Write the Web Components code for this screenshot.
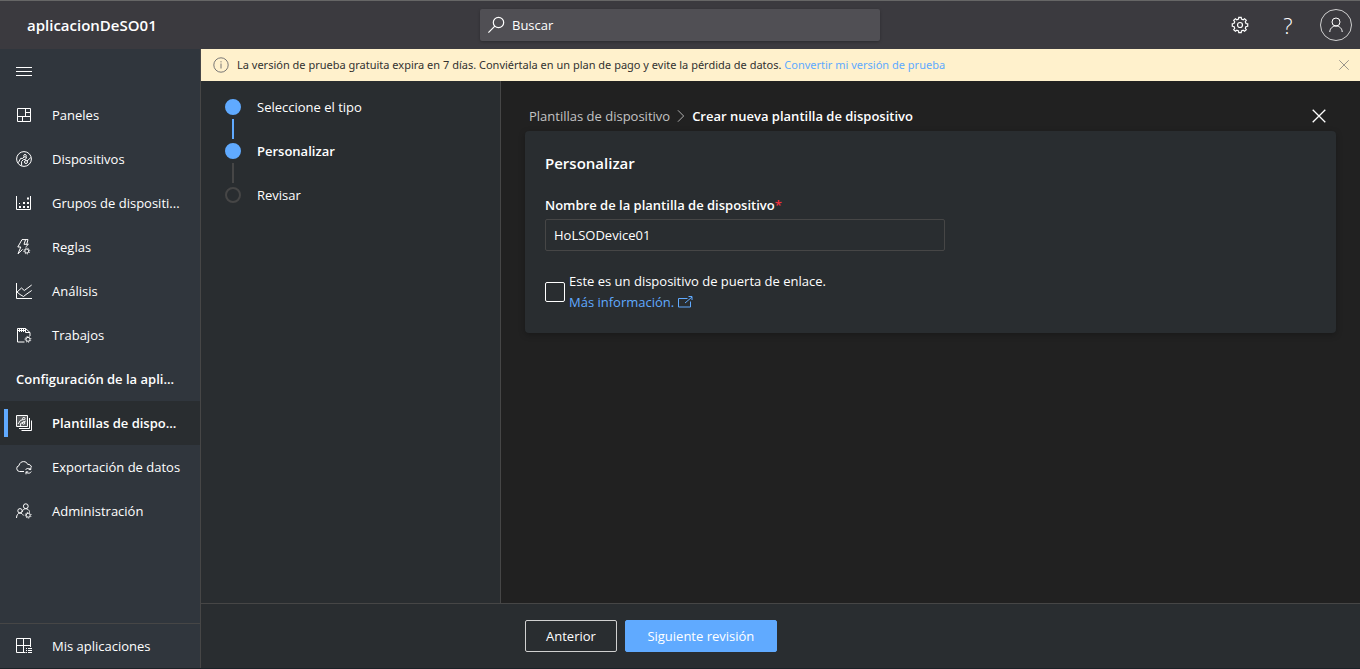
<!DOCTYPE html>
<html lang="es">
<head>
<meta charset="utf-8">
<meta name="viewport" content="width=device-width, initial-scale=1">
<title>aplicacionDeSO01</title>
<style>
  :root {
    --bar: #3b3a3f; --field: #504f54; --nav: #30363d; --panel: #292d30; --page: #212121;
    --line: #464646; --accent: #60aaff; --notice: #fff1cc;
    --base: 13px; --small: 11px; --large: 15px;
  }
  body {
    margin: 0; min-height: 100vh; display: flex; background: var(--page); color: #fff;
    font: 13px/20px "Open Sans", "Noto Sans", sans-serif;
  }
  central-app { flex: 1; }
</style>
</head>
<body>
<central-app></central-app>
<script>
function gear(cx, cy, outer, inner, teeth) {
  const step = Math.PI * 2 / teeth;
  const pts = [];
  for (let i = 0; i < teeth; i++) {
    const a = i * step;
    for (const [r, off] of [[inner, -0.3], [outer, -0.2], [outer, 0.2], [inner, 0.3]]) {
      pts.push((cx + r * Math.cos(a + off * step)).toFixed(2) + ' ' + (cy + r * Math.sin(a + off * step)).toFixed(2));
    }
  }
  return 'M' + pts.join('L') + 'Z';
}
const smallGear = (x, y) => `<circle cx="${x}" cy="${y}" r="2"/><path stroke-dasharray="1.1 1.18" d="M${x - 2.9} ${y}a2.9 2.9 0 1 0 5.8 0a2.9 2.9 0 1 0 -5.8 0"/>`;

const ICONS = {
  menu: '<path d="M0 4.5h16M0 8.5h16M0 12.5h16"/>',
  panels: '<path d="M1.5 1.5h13v13h-13zM1.5 9.5h13M9.5 1.5v8M9.5 5.5h5M6.5 9.5v5"/>',
  devices: '<circle cx="8" cy="8" r="7.4"/><circle cx="9" cy="4.8" r="1.3"/><circle cx="10" cy="11" r="1.5"/><path d="M8 5.8L6.8 7.4H4.6L2.4 11.6M5.6 14.6V10.4l1.8-1.8L9.6 8.4l1-2.6M11 10l3.8-3.4"/>',
  groups: '<path d="M.5 1v13.5h14V1"/><g fill="currentColor" stroke="none"><path d="M3 11h2v2H3zM7 11h2v2H7zM11 11h2v2h-2zM7 7h2v2H7zM11 7h2v2h-2zM11 2.5h2v2h-2zM3 8h1v1H3z"/></g>',
  rules: '<path d="M10.8 5L12 .6H6L1.8 8h3L2 14.8l4.6-4.4M9.6 .6L8 5.3h4.4L9.6 8"/>' + smallGear(10.8, 12),
  analytics: '<path d="M.5 0v15.5H16M1 9l4.5-4 2.8 2.5L15.7 2M1 9l3 2.5 3.5 2L10 11.5l5.7-4"/>',
  jobs: '<path d="M8.5 15H1.5V1.5h8l4.5 4v3.5M9.5 1.5v4H14M3.5 2v3M5.5 2v3M7.5 2v3M2 3.5h7"/>' + smallGear(12, 12.3),
  templates: '<path fill="#ffffff38" d="M.5 .5h11v11H.5z"/><path d="M3 13.5h10.5V3M5.5 15.5h10V5.5"/><circle cx="7.8" cy="3.6" r="1.2"/><circle cx="7.6" cy="8" r="1.2"/><path d="M7 4.6L4.5 5.4 2 9M4.6 11V8.5L9.8 6"/>',
  exporting: '<path d="M8 12.5H3.5A3 3 0 0 1 3 6.6C3.4 3.9 5.5 2.6 7.6 2.6c2 0 3.5 1.1 4 2.7 2 0 3.7 1 3.9 3"/><path d="M9.5 11c.6-1.6 3.8-2.4 5.3-.4V8.4M14.8 10.6h-2.2M15.3 12.5c-.7 2-4 2.3-5.3.4v2.4M10 12.9h2.2"/>',
  admin: '<circle cx="9.8" cy="3.2" r="2.4"/><circle cx="4" cy="7.8" r="2.2"/><path d="M.5 15c.1-3 1.5-5 3.5-5 1.6 0 2.7 1 3.3 2.5M6 9c.6-2 2-3.3 3.8-3.3 1.7 0 3.2 1.2 3.8 3"/>' + smallGear(12.2, 12.2),
  apps: '<path d="M9.5 14.5h-9V.5h14v8.5M7.5 .5v14M.5 7.5h14"/><path d="M10 10.5h1M12 10.5h4M10 12.5h1M12 12.5h4M10 14.5h1M12 14.5h4"/>',
  search: '<circle cx="10.5" cy="5.5" r="5.2" stroke-width="1.2"/><path stroke-width="1.2" d="M6.8 9.2L.4 15.6"/>',
  settings: `<path stroke-width="1.2" d="${gear(8, 8, 7.8, 6.2, 8)}"/><circle cx="8" cy="8" r="2.5" stroke-width="1.2"/>`,
  person: '<circle cx="8" cy="5" r="4"/><path d="M1.8 15c0-3.4 2.7-6 6.2-6s6.2 2.6 6.2 6"/>',
  info: '<circle cx="8" cy="8" r="7.2"/><path d="M8 6.5v5M8 4.2v1.2"/>',
  close: '<path d="M1.7 1.7l12.6 12.6M14.3 1.7L1.7 14.3"/>',
  chevron: '<path d="M4.5 1.5L11 8l-6.5 6.5"/>',
  external: '<path d="M9.5 3.5h-9v8.5h12V6.5M7 8L14 2M10.5 1.5h3.5v3.5"/>'
};

function define(name, html, setup) {
  const template = document.createElement('template');
  template.innerHTML = html;
  customElements.define(name, class extends HTMLElement {
    connectedCallback() {
      if (this.shadowRoot) return;
      this.attachShadow({ mode: 'open' }).append(template.content.cloneNode(true));
      if (setup) setup(this, this.shadowRoot);
    }
  });
}

define('ui-icon', `
<style>
  :host { display: block; flex: none; width: 16px; height: 16px; }
  svg { display: block; width: 100%; height: 100%; overflow: visible; fill: none; stroke: currentColor; stroke-width: var(--stroke, 1); }
</style>
<svg viewBox="0 0 16 16" aria-hidden="true"></svg>`,
(host, root) => { root.querySelector('svg').innerHTML = ICONS[host.getAttribute('name')] || ''; });

define('app-header', `
<style>
  :host { display: grid; grid-template-columns: 1fr minmax(120px, 400px) 1fr; align-items: center; box-sizing: border-box; height: 49px; background: var(--bar); border-top: 1px solid #666; }
  h1 { margin: 0; padding-left: 27px; font-size: var(--large); line-height: 24px; font-weight: 600; }
  .search { display: flex; align-items: center; gap: 8px; height: 32px; padding: 0 8px; border-radius: 2px; background: var(--field); box-shadow: 0 1px 3px #0004; }
  input { flex: 1; min-width: 0; padding: 0; border: 0; outline: 0; background: none; color: #fff; font: inherit; }
  input::placeholder { color: #fff; opacity: 1; }
  .tools { display: flex; justify-content: flex-end; align-items: center; padding-right: 8px; }
  button { display: grid; place-items: center; width: 48px; height: 48px; padding: 0; border: 0; background: none; color: #fff; font: inherit; }
  .help { font-size: 22px; font-weight: 300; }
  .me { width: 32px; height: 32px; margin-left: 8px; border: 1px solid #d0d0d0; border-radius: 50%; }
</style>
<h1>aplicacionDeSO01</h1>
<label class="search"><ui-icon name="search"></ui-icon><input type="text" placeholder="Buscar" aria-label="Buscar"></label>
<div class="tools">
  <button type="button" aria-label="Configuración"><ui-icon name="settings"></ui-icon></button>
  <button type="button" class="help" aria-label="Ayuda">?</button>
  <button type="button" class="me" aria-label="Cuenta"><ui-icon name="person"></ui-icon></button>
</div>`);

define('nav-item', `
<style>
  :host { display: block; }
  a { position: relative; display: flex; align-items: center; gap: 20px; height: 44px; padding: 0 16px; color: #fff; text-decoration: none; white-space: nowrap; }
  :host([current]) a { background: var(--panel); font-weight: 600; }
  :host([current]) a::before { content: ""; position: absolute; left: 4px; top: 8px; bottom: 8px; width: 4px; background: var(--accent); }
</style>
<a href="#"><span><slot></slot></span></a>`,
(host, root) => {
  const link = root.querySelector('a');
  const icon = document.createElement('ui-icon');
  icon.setAttribute('name', host.getAttribute('icon'));
  link.prepend(icon);
  if (host.hasAttribute('current')) link.setAttribute('aria-current', 'page');
});

define('side-nav', `
<style>
  :host { display: flex; flex-direction: column; flex: none; width: 200px; background: var(--nav); border-right: 1px solid var(--line); }
  nav { flex: 1; }
  button { display: flex; align-items: center; height: 44px; padding: 0 16px; border: 0; background: none; color: #fff; }
  h2 { margin: 0; padding: 0 16px; font-size: var(--base); line-height: 44px; font-weight: 600; white-space: nowrap; }
  .bottom { border-top: 1px solid var(--line); }
</style>
<nav aria-label="Principal">
  <button type="button" aria-label="Menú"><ui-icon name="menu"></ui-icon></button>
  <nav-item icon="panels">Paneles</nav-item>
  <nav-item icon="devices">Dispositivos</nav-item>
  <nav-item icon="groups">Grupos de dispositi...</nav-item>
  <nav-item icon="rules">Reglas</nav-item>
  <nav-item icon="analytics">Análisis</nav-item>
  <nav-item icon="jobs">Trabajos</nav-item>
  <h2>Configuración de la apli...</h2>
  <nav-item icon="templates" current>Plantillas de dispo...</nav-item>
  <nav-item icon="exporting">Exportación de datos</nav-item>
  <nav-item icon="admin">Administración</nav-item>
</nav>
<div class="bottom"><nav-item icon="apps">Mis aplicaciones</nav-item></div>`);

define('trial-banner', `
<style>
  :host { display: flex; align-items: center; gap: 8px; min-height: 32px; padding: 0 8px 0 12px; background: var(--notice); color: #323130; font-family: "Noto Sans", "Open Sans", sans-serif; font-size: var(--small); }
  p { flex: 1; margin: 0; }
  a { color: var(--accent); text-decoration: none; }
  button { display: grid; place-items: center; width: 16px; height: 32px; padding: 0; border: 0; background: none; color: #605e5c; }
  button ui-icon { width: 12px; height: 12px; }
  ui-icon { color: #797775; }
</style>
<ui-icon name="info"></ui-icon>
<p>La versión de prueba gratuita expira en 7 días. Conviértala en un plan de pago y evite la pérdida de datos. <a href="#">Convertir mi versión de prueba</a></p>
<button type="button" aria-label="Descartar"><ui-icon name="close"></ui-icon></button>`);

define('wizard-step', `
<style>
  :host { display: flex; align-items: center; gap: 16px; height: 44px; position: relative; }
  i { box-sizing: border-box; width: 16px; height: 16px; border: 2px solid var(--line); border-radius: 50%; }
  :host([state]) i { border-color: var(--accent); background: var(--accent); }
  :host([state="current"]) { font-weight: 600; }
  :host(:not(:last-child))::after { content: ""; position: absolute; left: 7px; top: 34px; width: 2px; height: 20px; background: var(--line); }
  :host([state="done"])::after { background: var(--accent) !important; }
</style>
<i></i><span><slot></slot></span>`);

define('wizard-steps', `
<style>
  :host { display: block; flex: none; box-sizing: border-box; width: 300px; padding: 4px 24px; background: var(--panel); border-right: 1px solid var(--line); }
</style>
<wizard-step state="done">Seleccione el tipo</wizard-step>
<wizard-step state="current">Personalizar</wizard-step>
<wizard-step>Revisar</wizard-step>`);

define('crumb-bar', `
<style>
  :host { display: flex; align-items: center; justify-content: space-between; height: 30px; padding: 0 8px 0 4px; }
  nav { display: flex; align-items: center; gap: 4px; }
  a { color: #c4c4c4; text-decoration: none; }
  nav ui-icon { width: 14px; height: 14px; color: #c4c4c4; }
  strong { font-weight: 600; }
  button { display: grid; place-items: center; width: 18px; height: 24px; padding: 0; border: 0; background: none; color: #fff; --stroke: 1.3; }
</style>
<nav aria-label="Ruta"><a href="#">Plantillas de dispositivo</a><ui-icon name="chevron"></ui-icon><strong>Crear nueva plantilla de dispositivo</strong></nav>
<button type="button" aria-label="Cerrar"><ui-icon name="close"></ui-icon></button>`);

define('template-form', `
<style>
  :host { display: block; padding: 20px; background: var(--panel); border-radius: 4px; box-shadow: 0 2px 6px #0004; }
  h2 { margin: 0 0 20px; font-size: var(--large); line-height: 24px; font-weight: 600; }
  .name { display: block; margin-bottom: 4px; font-weight: 600; }
  .name span { color: #f1303b; }
  .text { display: block; box-sizing: border-box; width: 100%; max-width: 400px; height: 32px; padding: 0 8px; border: 1px solid var(--line); border-radius: 2px; outline: 0; background: none; color: #fff; font: inherit; }
  .gateway { display: flex; align-items: center; gap: 4px; margin-top: 20px; line-height: 21px; }
  .gateway input { appearance: none; flex: none; width: 20px; height: 20px; margin: 0; border: 1px solid #fff; border-radius: 2px; }
  .gateway label { display: block; }
  a { display: inline-flex; align-items: center; gap: 4px; color: var(--accent); text-decoration: none; }
</style>
<h2>Personalizar</h2>
<label class="name" for="name">Nombre de la plantilla de dispositivo<span>*</span></label>
<input class="text" id="name" type="text" value="HoLSODevice01" required>
<div class="gateway">
  <input id="gateway" type="checkbox">
  <div><label for="gateway">Este es un dispositivo de puerta de enlace.</label><a href="#">Más información.<ui-icon name="external"></ui-icon></a></div>
</div>`);

define('action-bar', `
<style>
  :host { display: flex; gap: 8px; padding: 16px 24px 16px 324px; background: var(--panel); border-top: 1px solid var(--line); }
  button { height: 32px; padding: 0 20px; border: 1px solid #d0d0d0; border-radius: 2px; background: none; color: #fff; font: inherit; }
  .next { min-width: 152px; border-color: var(--accent); background: var(--accent); }
</style>
<button type="button">Anterior</button>
<button type="button" class="next">Siguiente revisión</button>`);

define('central-app', `
<style>
  :host { display: flex; flex-direction: column; border-bottom: 1px solid #1b2227; }
  .body { flex: 1; display: flex; }
  .main { flex: 1; min-width: 0; display: flex; flex-direction: column; }
  .work { flex: 1; display: flex; }
  main { flex: 1; min-width: 0; padding: 20px 24px; background: var(--page); }
</style>
<app-header></app-header>
<div class="body">
  <side-nav></side-nav>
  <div class="main">
    <trial-banner></trial-banner>
    <div class="work">
      <wizard-steps></wizard-steps>
      <main><crumb-bar></crumb-bar><template-form></template-form></main>
    </div>
    <action-bar></action-bar>
  </div>
</div>`);
</script>
</body>
</html>
